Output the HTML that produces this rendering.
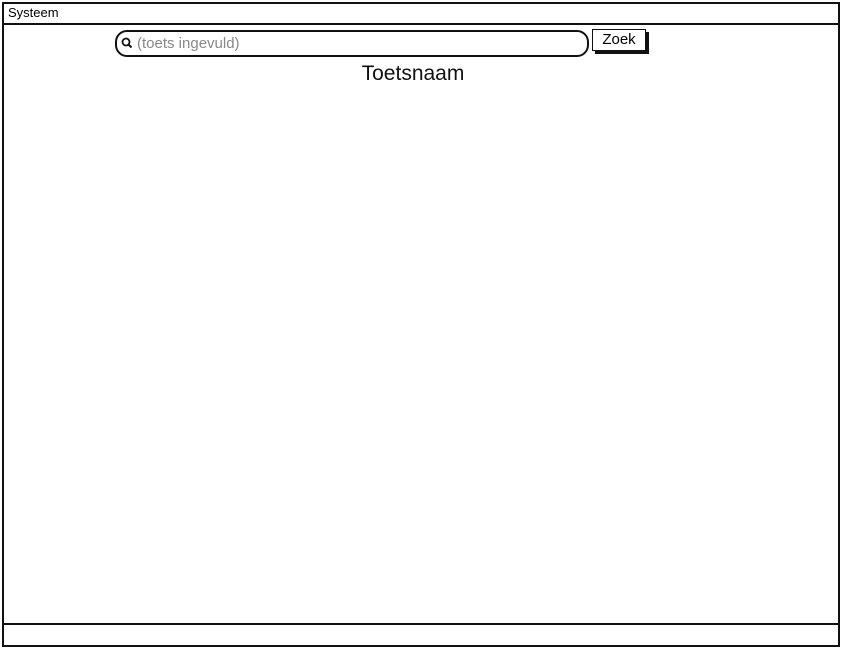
<!DOCTYPE html>
<html><head><meta charset="utf-8"><style>
html,body{margin:0;padding:0;background:#fff;width:841px;height:648px;overflow:hidden;font-family:"Liberation Sans",sans-serif;}
.frame{position:absolute;left:2px;top:2px;width:834px;height:641px;border:2px solid #111;}
.title{position:absolute;left:2px;top:2px;width:836px;height:23px;border-bottom:2px solid #111;font-size:13px;line-height:22px;padding-left:6px;box-sizing:border-box;}
.footer{position:absolute;left:4px;top:623px;width:834px;border-top:2px solid #111;}
.search{position:absolute;left:115px;top:30px;width:470px;height:23px;border:2px solid #111;border-radius:12px;}
.ph{position:absolute;left:137px;top:34px;font-size:15px;color:#888;line-height:20px;}
.btn{position:absolute;left:592px;top:29px;width:52px;height:20px;border:1px solid #111;box-shadow:3px 3px 0 #111;font-size:15px;line-height:20px;text-align:center;background:#fff;}
.h{position:absolute;left:0;width:826px;top:61px;text-align:center;font-size:21px;line-height:26px;color:#111;}
</style></head><body>
<div class="frame"></div>
<div class="title">Systeem</div>
<div class="footer"></div>
<div class="search"></div>
<svg style="position:absolute;left:121px;top:37px" width="12" height="12" viewBox="0 0 12 12"><circle cx="5" cy="5" r="3.5" fill="none" stroke="#111" stroke-width="1.8"/><line x1="7.5" y1="7.5" x2="10.5" y2="10.5" stroke="#111" stroke-width="2"/></svg>
<div class="ph">(toets ingevuld)</div>
<div class="btn">Zoek</div>
<div class="h">Toetsnaam</div>
</body></html>
